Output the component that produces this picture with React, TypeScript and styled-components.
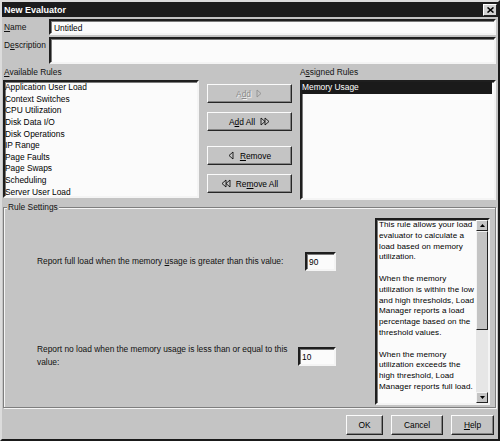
import React, { FC } from 'react';
import styled, { createGlobalStyle } from 'styled-components';

const GlobalStyle = createGlobalStyle`
    html, body {
        margin: 0;
        padding: 0;
        background: #c4c4c4;
    }
    body {
        font-family: "Liberation Sans", Arial, sans-serif;
        font-size: 8.4px;
        color: #111;
    }
`;

const Window = styled.div`
    width: 500px;
    height: 441px;
    box-sizing: border-box;
    background: #c4c4c4;
    border: 2px solid;
    border-color: #dcdcdc #1a1a1a #1a1a1a #dcdcdc;
    display: flex;
    flex-direction: column;
`;

const TitleBar = styled.div`
    height: 15px;
    background: #1c1c1c;
    color: #fff;
    font-weight: bold;
    font-size: 9px;
    display: flex;
    align-items: center;
    justify-content: space-between;
    padding: 0 1px 0 2px;
`;

const CloseBox = styled.div`
    width: 12px;
    height: 10px;
    background: #d2d2d2;
    border: 1px solid;
    border-color: #fff #222 #222 #fff;
    display: flex;
    align-items: center;
    justify-content: center;
`;

const Body = styled.div`
    flex: 1;
    display: flex;
    flex-direction: column;
    padding: 0 2px 0 1px;
`;

const FieldRow = styled.div<{ $top: number }>`
    display: flex;
    margin-top: ${(p) => p.$top}px;
`;

const FieldLabel = styled.div`
    width: 45px;
    padding-left: 1px;
    padding-top: 3px;
    flex: none;
`;

const Sunken = styled.div`
    box-sizing: border-box;
    background: #fbfbfb;
    border: 2px solid;
    border-color: #1e1e1e #f4f4f4 #f4f4f4 #1e1e1e;
    box-shadow: inset 1px 1px 0 #7a7a7a;
`;

const TextBox = styled(Sunken)<{ $h: number; $w?: number }>`
    height: ${(p) => p.$h}px;
    ${(p) => (p.$w ? `width: ${p.$w}px; flex: none;` : 'flex: 1;')}
    padding: 2px 3px;
    line-height: 11px;
    color: #000;
`;

const ListGrid = styled.div`
    display: grid;
    grid-template-columns: 196px 85px 1fr;
    column-gap: 8px;
`;

const Headers = styled(ListGrid)`
    margin-top: 3px;
    height: 11px;
    line-height: 11px;
`;

const Header = styled.div<{ $col: number }>`
    grid-column: ${(p) => p.$col};
    padding-left: ${(p) => (p.$col === 1 ? 1 : 0)}px;
`;

const Lists = styled(ListGrid)`
    margin-top: 2px;
    height: 120px;
`;

const ListBox = styled(Sunken)<{ $h: number }>`
    height: ${(p) => p.$h}px;
    padding: 0;
    line-height: 11.65px;
    color: #000;
`;

const ListItem = styled.div<{ $selected?: boolean }>`
    height: 11.65px;
    padding-left: 0;
    margin-right: 2px;
    background: ${(p) => (p.$selected ? '#1a1a1a' : 'transparent')};
    color: ${(p) => (p.$selected ? '#fff' : '#000')};
    white-space: nowrap;
`;

const ButtonColumn = styled.div`
    display: flex;
    flex-direction: column;
    padding-top: 4px;
`;

const Button = styled.div<{ $top?: number; $w?: number; $h?: number; $disabled?: boolean }>`
    box-sizing: border-box;
    height: ${(p) => p.$h ?? 19}px;
    ${(p) => (p.$w ? `width: ${p.$w}px;` : '')}
    margin-top: ${(p) => p.$top ?? 0}px;
    background: #c4c4c4;
    border: 1px solid;
    border-color: #fbfbfb #262626 #262626 #fbfbfb;
    box-shadow: inset -1px -1px 0 #848484;
    display: flex;
    align-items: center;
    justify-content: center;
    gap: 5px;
    color: ${(p) => (p.$disabled ? '#8c8c8c' : '#000')};
    text-shadow: ${(p) => (p.$disabled ? '1px 1px 0 #f0f0f0' : 'none')};
    svg {
        display: block;
    }
`;

const Key = styled.span`
    text-decoration: underline;
`;

const Group = styled.fieldset`
    margin: 2px 0 0 0;
    padding: 5px 5px 2px 0;
    border: 1px solid #7e7e7e;
    box-shadow: 1px 1px 0 #f4f4f4, inset 1px 1px 0 #f4f4f4;
    display: flex;
    min-width: 0;
`;

const Legend = styled.legend`
    margin-left: 3px;
    padding: 0 1px;
    line-height: 11px;
    background: #c4c4c4;
`;

const Settings = styled.div`
    flex: 1;
    display: flex;
    flex-direction: column;
    padding: 34px 39px 0 33px;
`;

const SettingRow = styled.div<{ $top: number }>`
    display: flex;
    align-items: center;
    margin-top: ${(p) => p.$top}px;
`;

const SettingLabel = styled.div`
    width: 255px;
    line-height: 13px;
`;

const NumberBox = styled(TextBox)`
    margin-left: auto;
    padding: 3px 2px;
`;

const HelpBox = styled(Sunken)`
    width: 115px;
    height: 187px;
    flex: none;
    display: flex;
    overflow: hidden;
`;

const HelpText = styled.div`
    flex: 1;
    padding-left: 2px;
    font-size: 8.1px;
    letter-spacing: 0.08px;
    line-height: 10.8px;
    color: #000;
    white-space: nowrap;
`;

const Para = styled.p`
    margin: 0 0 10.8px;
`;

const ScrollBar = styled.div`
    width: 12px;
    display: flex;
    flex-direction: column;
    background: #e6e6e6;
`;

const ScrollArrow = styled.div`
    height: 11px;
    box-sizing: border-box;
    background: #c4c4c4;
    border: 1px solid;
    border-color: #f4f4f4 #222 #222 #f4f4f4;
    display: flex;
    align-items: center;
    justify-content: center;
`;

const Thumb = styled.div`
    height: 99px;
    box-sizing: border-box;
    background: #c4c4c4;
    border: 1px solid;
    border-color: #f4f4f4 #222 #222 #f4f4f4;
`;

const Track = styled.div`
    flex: 1;
`;

const Footer = styled.div`
    display: flex;
    justify-content: flex-end;
    gap: 8px;
    margin-top: 7px;
    padding-right: 2px;
`;

const Arrow: FC<{ dir: 'up' | 'down' }> = ({ dir }) => (
    <svg width="5" height="3" viewBox="0 0 5 3">
        <path d={dir === 'up' ? 'M2.5 0 L5 3 L0 3 Z' : 'M0 0 L5 0 L2.5 3 Z'} fill="#000" />
    </svg>
);

const TriIcon: FC<{ dir: 'left' | 'right'; double?: boolean; color?: string }> = ({
    dir,
    double,
    color = '#000',
}) => {
    const one = dir === 'right' ? 'M1 1 L1 8 L5 4.5 Z' : 'M5 1 L5 8 L1 4.5 Z';
    const two = dir === 'right' ? 'M5 1 L5 8 L9 4.5 Z' : 'M9 1 L9 8 L5 4.5 Z';
    return (
        <svg width={double ? 10 : 7} height="9" viewBox={`0 0 ${double ? 10 : 7} 9`}>
            <path d={one} fill="none" stroke={color} strokeWidth="0.8" />
            {double && <path d={two} fill="none" stroke={color} strokeWidth="0.8" />}
        </svg>
    );
};

const available = [
    'Application User Load',
    'Context Switches',
    'CPU Utilization',
    'Disk Data I/O',
    'Disk Operations',
    'IP Range',
    'Page Faults',
    'Page Swaps',
    'Scheduling',
    'Server User Load',
];

const help = [
    ['This rule allows your load', 'evaluator to calculate a', 'load based on memory', 'utilization.'],
    [
        'When the memory',
        'utilization is within the low',
        'and high thresholds, Load',
        'Manager reports a load',
        'percentage based on the',
        'threshold values.',
    ],
    ['When the memory', 'utilization exceeds the', 'high threshold, Load', 'Manager reports full load.'],
];

const App: FC = () => (
    <>
        <GlobalStyle />
        <Window>
            <TitleBar>
                <span>New Evaluator</span>
                <CloseBox>
                    <svg width="7" height="6" viewBox="0 0 7 6">
                        <path d="M0.5 0.5 L6.5 5.5 M6.5 0.5 L0.5 5.5" stroke="#000" strokeWidth="1.6" />
                    </svg>
                </CloseBox>
            </TitleBar>
            <Body>
                <FieldRow $top={2}>
                    <FieldLabel>
                        <Key>N</Key>ame
                    </FieldLabel>
                    <TextBox $h={16}>Untitled</TextBox>
                </FieldRow>
                <FieldRow $top={2}>
                    <FieldLabel>
                        D<Key>e</Key>scription
                    </FieldLabel>
                    <TextBox $h={27} />
                </FieldRow>

                <Headers>
                    <Header $col={1}>
                        <Key>A</Key>vailable Rules
                    </Header>
                    <Header $col={3}>
                        A<Key>s</Key>signed Rules
                    </Header>
                </Headers>
                <Lists>
                    <ListBox $h={118}>
                        {available.map((r) => (
                            <ListItem key={r}>{r}</ListItem>
                        ))}
                    </ListBox>
                    <ButtonColumn>
                        <Button $disabled>
                            <span>
                                A<Key>d</Key>d
                            </span>
                            <TriIcon dir="right" color="#8c8c8c" />
                        </Button>
                        <Button $top={9}>
                            <span>
                                A<Key>d</Key>d All
                            </span>
                            <TriIcon dir="right" double />
                        </Button>
                        <Button $top={15}>
                            <TriIcon dir="left" />
                            <span>
                                <Key>R</Key>emove
                            </span>
                        </Button>
                        <Button $top={9}>
                            <TriIcon dir="left" double />
                            <span>
                                Re<Key>m</Key>ove All
                            </span>
                        </Button>
                    </ButtonColumn>
                    <ListBox $h={120}>
                        <ListItem $selected>Memory Usage</ListItem>
                    </ListBox>
                </Lists>

                <Group>
                    <Legend>Rule Settings</Legend>
                    <Settings>
                        <SettingRow $top={0}>
                            <SettingLabel>
                                Report full load when the memory <Key>u</Key>sage is greater than this value:
                            </SettingLabel>
                            <NumberBox $h={19} $w={31}>
                                90
                            </NumberBox>
                        </SettingRow>
                        <SettingRow $top={72}>
                            <SettingLabel>
                                Report no load when the memory usa<Key>g</Key>e is less than or equal to this
                                <br />
                                value:
                            </SettingLabel>
                            <NumberBox $h={19} $w={38}>
                                10
                            </NumberBox>
                        </SettingRow>
                    </Settings>
                    <HelpBox>
                        <HelpText>
                            {help.map((lines, i) => (
                                <Para key={i}>
                                    {lines.map((l, j) => (
                                        <React.Fragment key={j}>
                                            {l}
                                            <br />
                                        </React.Fragment>
                                    ))}
                                </Para>
                            ))}
                        </HelpText>
                        <ScrollBar>
                            <ScrollArrow>
                                <Arrow dir="up" />
                            </ScrollArrow>
                            <Thumb />
                            <Track />
                            <ScrollArrow>
                                <Arrow dir="down" />
                            </ScrollArrow>
                        </ScrollBar>
                    </HelpBox>
                </Group>

                <Footer>
                    <Button $w={37} $h={20}>
                        OK
                    </Button>
                    <Button $w={52} $h={20}>
                        Cancel
                    </Button>
                    <Button $w={43} $h={20}>
                        <span>
                            <Key>H</Key>elp
                        </span>
                    </Button>
                </Footer>
            </Body>
        </Window>
    </>
);

export default App;
